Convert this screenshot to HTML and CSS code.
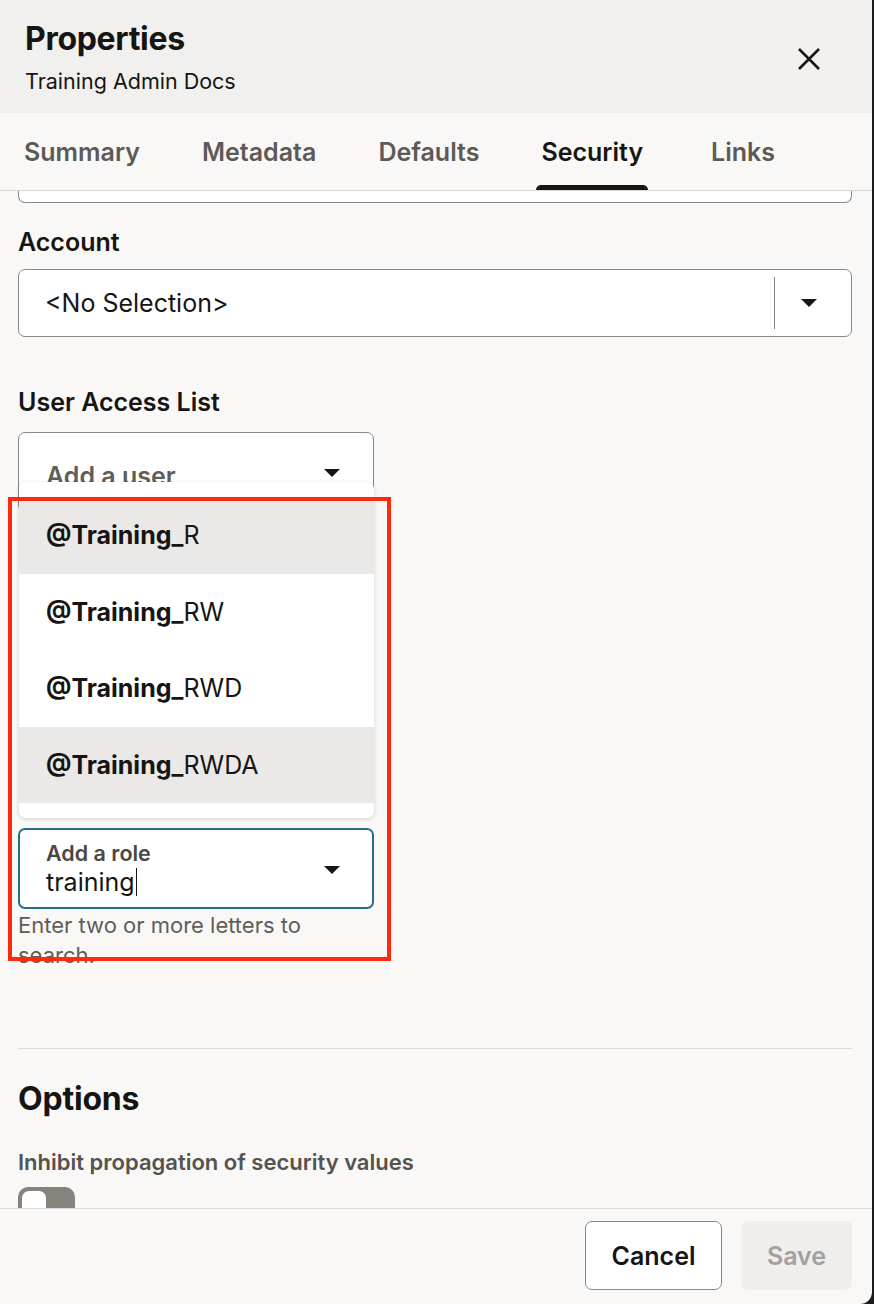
FILE: index.html
```html
<!DOCTYPE html>
<html lang="en">
<head>
<meta charset="utf-8">
<title>Properties</title>
<link rel="stylesheet" href="styles.css">
</head>
<body>
<div class="panel">
  <header class="head">
    <div class="head-text">
      <h1 class="title">Properties</h1>
      <div class="subtitle">Training Admin Docs</div>
    </div>
    <button class="close" aria-label="Close">
      <svg width="24" height="24" viewBox="0 0 24 24"><path d="M2 2 L22 22 M22 2 L2 22" stroke="#161513" stroke-width="2.6" fill="none"/></svg>
    </button>
  </header>

  <nav class="tabs">
    <span class="tab">Summary</span>
    <span class="tab">Metadata</span>
    <span class="tab">Defaults</span>
    <span class="tab active">Security</span>
    <span class="tab tab-links">Links</span>
  </nav>

  <main class="body">
    <div class="prev-field"></div>

    <div class="label">Account</div>
    <div class="select">
      <span class="select-value">&lt;No Selection&gt;</span>
      <span class="select-sep"></span>
      <span class="caret"></span>
    </div>

    <div class="label label-ual">User Access List</div>
    <div class="combo-wrap">
      <div class="combo user-combo">
        <span class="placeholder">Add a user</span>
        <span class="caret"></span>
      </div>
      <ul class="dropdown">
        <li class="item hl"><b>@Training_</b>R</li>
        <li class="item"><b>@Training_</b>RW</li>
        <li class="item"><b>@Training_</b>RWD</li>
        <li class="item hl"><b>@Training_</b>RWDA</li>
      </ul>
    </div>

    <div class="combo role-combo">
      <div class="role-text">
        <span class="role-label">Add a role</span>
        <span class="role-value">training<span class="cursor"></span></span>
      </div>
      <span class="caret"></span>
    </div>
    <p class="helper">Enter two or more letters to search.</p>

    <hr class="divider">

    <h2 class="options">Options</h2>
    <div class="opt-label">Inhibit propagation of security values</div>
    <div class="toggle"><span class="knob"></span></div>
  </main>

  <footer class="foot">
    <button class="btn cancel">Cancel</button>
    <button class="btn save">Save</button>
  </footer>

  <div class="annotation"></div>
</div>
</body>
</html>
```

FILE: styles.css
```css
* { box-sizing: border-box; }
html, body { margin: 0; padding: 0; }
body {
  background: #1c1c1c;
  width: 874px;
  height: 1304px;
  overflow: hidden;
  font-family: Inter, "Noto Sans", sans-serif;
  color: #161513;
}
.panel {
  position: relative;
  width: 872px;
  height: 1304px;
  background: #f9f8f6;
  display: flex;
  flex-direction: column;
  border-bottom-right-radius: 12px;
  overflow: hidden;
}
.head {
  height: 113px;
  flex: none;
  background: #f1f0ee;
  display: flex;
  align-items: flex-start;
  justify-content: space-between;
  padding: 20px 51px 0 25px;
}
.title {
  margin: 0;
  font-size: 32px;
  font-weight: 700;
  line-height: 38px;
  letter-spacing: -0.3px;
}
.subtitle {
  margin-top: 9px;
  font-size: 21.5px;
  line-height: 28px;
  color: #161513;
}
.close {
  border: 0;
  background: none;
  padding: 0;
  margin-top: 27px;
  width: 24px;
  height: 24px;
  display: flex;
}
.tabs {
  flex: none;
  height: 78px;
  border-bottom: 1px solid #d9d7d4;
  display: flex;
  gap: 52px;
  padding: 0 0 0 19px;
}
.tab {
  position: relative;
  padding: 0 5px;
  font-size: 25px;
  font-weight: 600;
  line-height: 78px;
  color: #5d5a56;
}
.tab-links { margin-left: 6px; }
.tab.active { color: #161513; }
.tab.active::after {
  content: "";
  position: absolute;
  left: 0;
  right: 0;
  bottom: 0;
  height: 5px;
  background: #161513;
  border-radius: 5px 5px 0 0;
}
.body {
  flex: 1;
  overflow: hidden;
  padding: 0 20px 0 18px;
  display: flex;
  flex-direction: column;
  align-items: stretch;
}
.body > * { flex-shrink: 0; }
.prev-field {
  height: 12px;
  background: #fff;
  border: 1px solid #8a8784;
  border-top: 0;
  border-radius: 0 0 7px 7px;
}
.label {
  margin-top: 24px;
  font-size: 25px;
  font-weight: 600;
  line-height: 30px;
}
.select {
  margin-top: 12px;
  height: 68px;
  background: #fff;
  border: 1px solid #8a8784;
  border-radius: 7px;
  display: flex;
  align-items: center;
  padding: 0 34px 0 26px;
}
.select-value {
  flex: 1;
  font-size: 25px;
}
.select-sep {
  width: 1px;
  height: 52px;
  background: #8a8784;
  margin-right: 26px;
}
.caret {
  flex: none;
  width: 0;
  height: 0;
  border-left: 8px solid transparent;
  border-right: 8px solid transparent;
  border-top: 8px solid #161513;
}
.label-ual { margin-top: 50px; }
.combo-wrap {
  position: relative;
  margin-top: 15px;
  width: 356px;
}
.combo {
  width: 356px;
  background: #fff;
  border: 1px solid #8a8784;
  border-radius: 7px;
  display: flex;
  align-items: center;
  padding: 0 33px 0 27px;
}
.user-combo {
  height: 80px;
  align-items: flex-start;
  padding-top: 28px;
}
.user-combo .caret { margin-top: 8px; }
.placeholder {
  flex: 1;
  font-size: 25px;
  font-weight: 600;
  line-height: 30px;
  color: #605d59;
}
.dropdown {
  position: absolute;
  top: 50px;
  left: 1px;
  width: 355px;
  margin: 0;
  padding: 15px 0 15px;
  list-style: none;
  background: #fff;
  border-radius: 7px;
  box-shadow: 0 1px 4px rgba(0,0,0,0.16);
}
.item {
  height: 76.5px;
  display: flex;
  align-items: center;
  padding: 0 27px;
  font-size: 25px;
}
.item b { font-weight: 700; }
.item.hl { background: #eae9e7; }
.role-combo {
  margin-top: 316px;
  height: 81px;
  border: 2px solid #24708c;
  padding: 0 32px 0 26px;
}
.role-text {
  flex: 1;
  display: flex;
  flex-direction: column;
}
.role-label {
  font-size: 21.5px;
  font-weight: 600;
  line-height: 26px;
  color: #4a4744;
}
.role-value {
  font-size: 25px;
  line-height: 32px;
  display: flex;
  align-items: center;
}
.cursor {
  display: inline-block;
  width: 1px;
  height: 28px;
  background: #161513;
  margin-left: 1px;
}
.role-combo .caret { margin-top: 2px; }
.helper {
  margin: 1px 0 0;
  width: 356px;
  font-size: 22px;
  line-height: 30px;
  color: #605d59;
}
.divider {
  margin: 78px 0 0;
  border: 0;
  border-top: 1px solid #dcdad7;
  width: 834px;
}
.options {
  margin: 32px 0 0;
  font-size: 32px;
  font-weight: 700;
  line-height: 36px;
  letter-spacing: -0.2px;
}
.opt-label {
  margin-top: 31px;
  font-size: 22px;
  font-weight: 600;
  line-height: 28px;
  color: #55524f;
}
.toggle {
  margin-top: 11px;
  width: 57px;
  height: 34px;
  background: #87827b;
  border-radius: 10px;
  padding: 4px;
}
.knob {
  display: block;
  width: 24px;
  height: 26px;
  background: #fff;
  border-radius: 7px;
}
.foot {
  flex: none;
  height: 96px;
  border-top: 1px solid #dcdad7;
  display: flex;
  justify-content: flex-end;
  align-items: flex-start;
  gap: 19px;
  padding: 12px 20px 0 0;
}
.btn {
  height: 69px;
  border-radius: 7px;
  font-family: Inter, "Noto Sans", sans-serif;
  font-size: 25px;
  font-weight: 600;
}
.cancel {
  width: 137px;
  background: #fff;
  border: 1px solid #8a8784;
  color: #161513;
}
.save {
  width: 111px;
  background: #efeeec;
  border: 0;
  color: #a3a19e;
}
.annotation {
  position: absolute;
  left: 8px;
  top: 497px;
  width: 383px;
  height: 464px;
  border: 4px solid #ff2a0a;
  pointer-events: none;
}
```
